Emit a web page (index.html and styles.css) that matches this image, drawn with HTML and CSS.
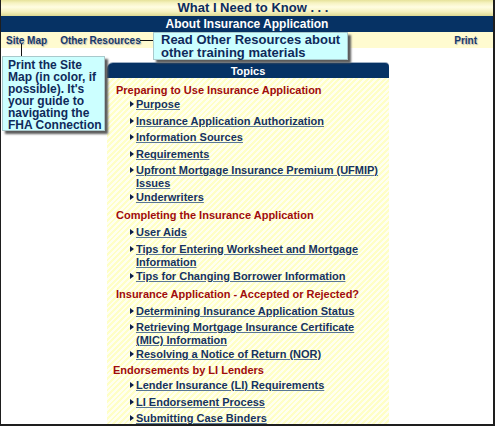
FILE: index.html
```html
<!DOCTYPE html>
<html>
<head>
<meta charset="utf-8">
<link rel="stylesheet" href="styles.css">
</head>
<body>
<div class="frame">
  <header class="title">What I Need to Know . . .</header>
  <div class="subtitle">About Insurance Application</div>
  <nav class="nav">
    <a class="nav-link">Site Map</a>
    <a class="nav-link">Other Resources</a>
    <span class="nav-spacer"></span>
    <a class="nav-link">Print</a>
  </nav>
  <main class="content">
    <section class="topics">
      <h2 class="topics-head">Topics</h2>
      <div class="topics-body">
        <h3 class="group group--first">Preparing to Use Insurance Application</h3>
        <ul class="links">
          <li class="item"><span class="tri"></span><a class="link">Purpose</a></li>
          <li class="item"><span class="tri"></span><a class="link">Insurance Application Authorization</a></li>
          <li class="item"><span class="tri"></span><a class="link">Information Sources</a></li>
          <li class="item"><span class="tri"></span><a class="link">Requirements</a></li>
          <li class="item item--two"><span class="tri"></span><a class="link">Upfront Mortgage Insurance Premium (UFMIP) Issues</a></li>
          <li class="item"><span class="tri"></span><a class="link">Underwriters</a></li>
        </ul>
        <h3 class="group">Completing the Insurance Application</h3>
        <ul class="links">
          <li class="item"><span class="tri"></span><a class="link">User Aids</a></li>
          <li class="item item--two"><span class="tri"></span><a class="link">Tips for Entering Worksheet and Mortgage Information</a></li>
          <li class="item"><span class="tri"></span><a class="link">Tips for Changing Borrower Information</a></li>
        </ul>
        <h3 class="group">Insurance Application - Accepted or Rejected?</h3>
        <ul class="links">
          <li class="item"><span class="tri"></span><a class="link">Determining Insurance Application Status</a></li>
          <li class="item item--two"><span class="tri"></span><a class="link">Retrieving Mortgage Insurance Certificate (MIC) Information</a></li>
          <li class="item"><span class="tri"></span><a class="link">Resolving a Notice of Return (NOR)</a></li>
        </ul>
        <h3 class="group group--tight">Endorsements by LI Lenders</h3>
        <ul class="links">
          <li class="item"><span class="tri"></span><a class="link">Lender Insurance (LI) Requirements</a></li>
          <li class="item"><span class="tri"></span><a class="link">LI Endorsement Process</a></li>
          <li class="item"><span class="tri"></span><a class="link">Submitting Case Binders</a></li>
        </ul>
      </div>
    </section>
  </main>

  <div class="connector connector--res"></div>
  <div class="callout callout--res">Read Other Resources about other training materials</div>
  <div class="connector connector--map"></div>
  <div class="callout callout--map">Print the Site Map (in color, if possible). It's your guide to navigating the FHA Connection</div>
</div>
</body>
</html>
```

FILE: styles.css
```css
html, body {
  margin: 0;
  padding: 0;
  background: #ffffff;
}

.frame {
  position: relative;
  width: 495px;
  height: 426px;
  box-sizing: border-box;
  border-left: 1px solid #1e1e1e;
  border-right: 2px solid #1e1e1e;
  border-bottom: 2px solid #1e1e1e;
  display: flex;
  flex-direction: column;
  overflow: hidden;
  font-family: "Liberation Sans", Arial, sans-serif;
}

.title {
  height: 16px;
  line-height: 16px;
  text-align: center;
  padding-left: 12px;
  font-size: 13px;
  font-weight: bold;
  color: #0d2c5c;
  background: linear-gradient(to bottom, #e6e29a 0px, #f6f3c2 3px, #fffde2 7px, #f4f0bc 12px, #dcd891 16px);
}

.subtitle {
  height: 16px;
  line-height: 16px;
  text-align: center;
  font-size: 12px;
  font-weight: bold;
  color: #ffffff;
  background: #063264;
}

.nav {
  height: 16px;
  display: flex;
  align-items: center;
  gap: 13px;
  padding: 0 16px 0 5px;
  background: #fffbd0;
}

.nav-link {
  font-size: 10px;
  font-weight: bold;
  color: #17386a;
  text-shadow: 1px 1px 1px #b8b8b0;
}

.nav-spacer {
  flex: 1;
}

.content {
  flex: 1;
  display: flex;
  padding: 15px 0 0 106px;
  min-height: 0;
}

.topics {
  width: 282px;
  display: flex;
  flex-direction: column;
}

.topics-head {
  margin: 0;
  height: 15px;
  line-height: 16px;
  text-align: center;
  font-size: 11px;
  font-weight: bold;
  color: #ffffff;
  background: #063264;
  border-radius: 6px 4px 0 0;
  box-shadow: 0 -1px 0 #9fb0c4;
}

.topics-body {
  flex: 1;
  padding: 6px 7px 0 9px;
  background: repeating-linear-gradient(135deg, #ffffc6 0px, #ffffc6 2px, #fffff0 2px, #fffff0 4px);
}

.group {
  margin: 0 0 4px 0;
  font-size: 11px;
  line-height: 13px;
  font-weight: bold;
  color: #a00c0c;
}

.group--first {
  margin-bottom: 1px;
}

.group--tight {
  margin-left: -3px;
  margin-top: -2px;
  margin-bottom: 2px;
}

.links {
  list-style: none;
  margin: 0 0 5px 0;
  padding: 0 0 0 14px;
}

.item {
  display: flex;
  align-items: flex-start;
  margin-bottom: 3.5px;
  line-height: 13px;
}

.item--two {
  margin-bottom: 1px;
}

.tri {
  flex: none;
  width: 0;
  height: 0;
  margin: 3px 2px 0 0;
  border-left: 4px solid #0c1e48;
  border-top: 3.5px solid transparent;
  border-bottom: 3.5px solid transparent;
}

.link {
  font-size: 11px;
  font-weight: bold;
  color: #16335f;
  text-decoration: underline;
  text-decoration-color: #5a7796;
  text-decoration-thickness: 1px;
  text-underline-offset: 1px;
}

.callout {
  position: absolute;
  box-sizing: border-box;
  background: #ccffff;
  border: 1px solid #a9c9cc;
  box-shadow: 3px 3px 2px #5c5c5c;
  font-size: 12px;
  font-weight: bold;
  line-height: 12px;
  color: #0f2a5a;
}

.callout--res {
  left: 152px;
  top: 32px;
  width: 195px;
  height: 28px;
  padding: 1px 4px 0 7px;
  font-size: 13px;
  line-height: 12.5px;
}

.callout--map {
  left: 1px;
  top: 56px;
  width: 103px;
  height: 75px;
  padding: 2px 2px 0 5px;
}

.connector {
  position: absolute;
  background: #111111;
}

.connector--res {
  left: 139px;
  top: 40px;
  width: 14px;
  height: 1px;
}

.connector--map {
  left: 20px;
  top: 44px;
  width: 1px;
  height: 12px;
}
```
